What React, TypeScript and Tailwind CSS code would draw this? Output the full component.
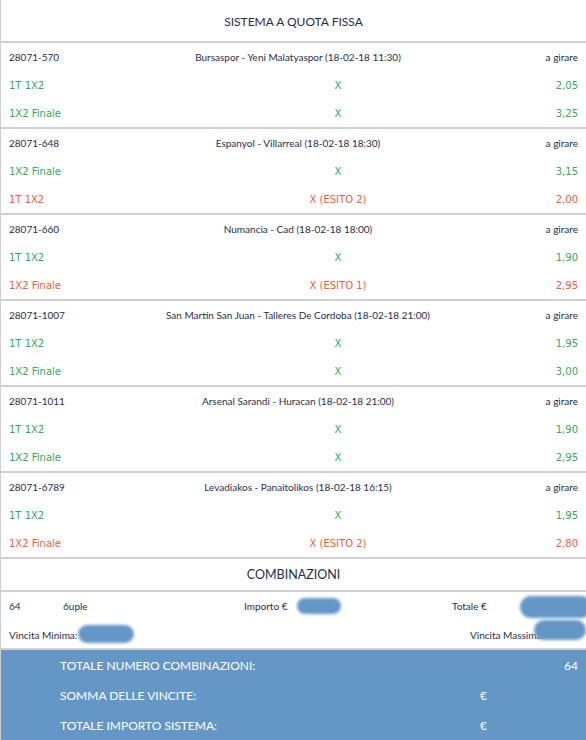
import React from 'react';

type Bet = { market: string; pick: string; odd: string; lost?: boolean };
type Match = { code: string; name: string; bets: Bet[] };

const matches: Match[] = [
  {
    code: '28071-570',
    name: 'Bursaspor - Yeni Malatyaspor (18-02-18 11:30)',
    bets: [
      { market: '1T 1X2', pick: 'X', odd: '2,05' },
      { market: '1X2 Finale', pick: 'X', odd: '3,25' },
    ],
  },
  {
    code: '28071-648',
    name: 'Espanyol - Villarreal (18-02-18 18:30)',
    bets: [
      { market: '1X2 Finale', pick: 'X', odd: '3,15' },
      { market: '1T 1X2', pick: 'X (ESITO 2)', odd: '2,00', lost: true },
    ],
  },
  {
    code: '28071-660',
    name: 'Numancia - Cad (18-02-18 18:00)',
    bets: [
      { market: '1T 1X2', pick: 'X', odd: '1,90' },
      { market: '1X2 Finale', pick: 'X (ESITO 1)', odd: '2,95', lost: true },
    ],
  },
  {
    code: '28071-1007',
    name: 'San Martin San Juan - Talleres De Cordoba (18-02-18 21:00)',
    bets: [
      { market: '1T 1X2', pick: 'X', odd: '1,95' },
      { market: '1X2 Finale', pick: 'X', odd: '3,00' },
    ],
  },
  {
    code: '28071-1011',
    name: 'Arsenal Sarandi - Huracan (18-02-18 21:00)',
    bets: [
      { market: '1T 1X2', pick: 'X', odd: '1,90' },
      { market: '1X2 Finale', pick: 'X', odd: '2,95' },
    ],
  },
  {
    code: '28071-6789',
    name: 'Levadiakos - Panaitolikos (18-02-18 16:15)',
    bets: [
      { market: '1T 1X2', pick: 'X', odd: '1,95' },
      { market: '1X2 Finale', pick: 'X (ESITO 2)', odd: '2,80', lost: true },
    ],
  },
];

const totals = [
  { label: 'TOTALE NUMERO COMBINAZIONI:', euro: '', value: '64' },
  { label: 'SOMMA DELLE VINCITE:', euro: '€', value: '' },
  { label: 'TOTALE IMPORTO SISTEMA:', euro: '€', value: '' },
];

// redacted amounts in the screenshot: blurred blue smudges
function Blob({ className }: { className: string }) {
  return <span className={`absolute rounded-full bg-[#6597c6] blur-[1.5px] ${className}`} />;
}

function MatchBlock({ match }: { match: Match }) {
  return (
    <div className="border-b-2 border-[#d0d0d0]">
      <div className="flex h-[28px] items-center px-2 pt-[1px] text-[10px] text-[#1f2d4d]">
        <div className="w-[100px]">{match.code}</div>
        <div className="flex-1 text-center whitespace-nowrap">{match.name}</div>
        <div className="w-[91px] text-right">a girare</div>
      </div>
      {match.bets.map((bet, i) => (
        <div
          key={i}
          className={`flex h-[28px] items-center px-2 pt-[1px] font-['DejaVu_Sans',sans-serif] text-[10px] ${
            bet.lost ? 'text-[#f25a3d]' : 'text-[#30a860]'
          }`}
        >
          <div className="w-[180px]">{bet.market}</div>
          <div className="flex-1 text-center">{bet.pick}</div>
          <div className="w-[91px] text-right">{bet.odd}</div>
        </div>
      ))}
    </div>
  );
}

export default function App() {
  return (
    <div className="h-[740px] w-[586px] overflow-hidden border-l border-[#cfcfcf] bg-white font-['Lato',sans-serif]">
      <div className="flex h-[43px] items-center justify-center border-b-2 border-[#d0d0d0] pt-[2px] text-[12px] text-[#1f2d4d]">
        SISTEMA A QUOTA FISSA
      </div>
      {matches.map((m) => (
        <MatchBlock key={m.code} match={m} />
      ))}
      <div className="flex h-[33px] items-center justify-center border-b-2 border-[#d0d0d0] pt-[2px] text-[12.5px] text-[#1f2d4d]">
        COMBINAZIONI
      </div>
      <div className="relative border-b-2 border-[#d0d0d0] text-[10px] text-[#1f2d4d]">
        <div className="flex h-[28px] items-center px-2">
          <div className="w-[54px]">64</div>
          <div className="w-[181px]">6uple</div>
          <div className="w-[208px]">Importo €</div>
          <div>Totale €</div>
        </div>
        <div className="flex h-[28px] items-center px-2 pt-[2px]">
          <div className="w-[461px]">Vincita Minima:</div>
          <div>Vincita Massima:</div>
        </div>
        <Blob className="left-[296px] top-[6px] h-[16px] w-[44px]" />
        <Blob className="left-[519px] top-[4px] h-[22px] w-[72px]" />
        <Blob className="left-[77px] top-[33px] h-[18px] w-[56px]" />
        <Blob className="left-[533px] top-[28px] h-[20px] w-[52px]" />
      </div>
      <div className="bg-[#6597c6] text-[12px] text-white">
        {totals.map((t) => (
          <div key={t.label} className="flex h-[30px] items-center pl-[59px] pr-2 pt-[1px]">
            <div className="w-[420px]">{t.label}</div>
            <div className="flex-1">{t.euro}</div>
            <div className="text-right">{t.value}</div>
          </div>
        ))}
      </div>
    </div>
  );
}
